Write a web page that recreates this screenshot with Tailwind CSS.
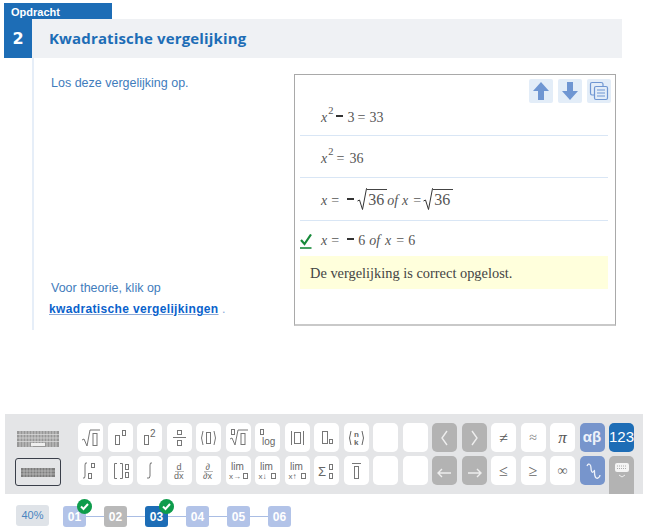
<!DOCTYPE html>
<html><head><meta charset="utf-8"><script src="https://cdn.jsdelivr.net/npm/@tailwindcss/browser@4"></script></head>
<body class="bg-white">
<div class="w-[645px] h-[531px] overflow-hidden font-['Liberation_Sans',sans-serif] text-[#3f7cbc]">
  <!-- opdracht -->
  <div class="pt-[3px] pl-[4px]">
    <div class="w-[108px] h-[16px] bg-[#1d6db6] text-white text-[11px] font-bold leading-[18px] pl-[7px]">Opdracht</div>
    <div class="flex h-[39px]">
      <div class="w-[28px] bg-[#1d6db6] text-white font-bold text-[16px] flex items-center justify-center font-['DejaVu_Sans',sans-serif]">2</div>
      <div class="w-[590px] bg-[#eff1f4] flex items-center pl-[17px] text-[#1d6db6] font-bold text-[15px] tracking-[0.15px] font-['Open_Sans',sans-serif]">Kwadratische vergelijking</div>
    </div>
    <div class="ml-[28px] h-[356px] flex items-start">
      <div class="w-[262px] h-[272px] border-l-2 border-[#e6eef8] pl-[17px] pt-[16px] flex flex-col text-[12.5px]">
        <div class="leading-[18px]">Los deze vergelijking op.</div>
        <div class="mt-[187px] leading-[18px]">Voor theorie, klik op</div>
        <div class="mt-[3px] -ml-[2px] leading-[18px] text-[#8aa8d8]"><a class="font-bold text-[12px] tracking-[0.35px] text-[#0a62cc] underline decoration-[#8aa8d8]">kwadratische vergelijkingen</a> .</div>
      </div>
      <!-- answer box -->
      <div class="mt-[16px] w-[322px] h-[252px] border border-[#a9a9a9] border-b-2 border-b-[#c9c9c9] relative pl-[5px] pr-[7px] font-['Liberation_Serif',serif] text-[#555] text-[14px] leading-[16px]">
        <div class="absolute top-[4px] right-[4px] flex gap-[5px]">
          <div class="w-[24px] h-[24px] bg-[#e3edf8] rounded-[2px] flex items-center justify-center">
            <svg width="18" height="20" viewBox="0 0 18 20"><path d="M9 1 L17 10 H12 V19 H6 V10 H1 Z" fill="#6f96d2"/></svg>
          </div>
          <div class="w-[24px] h-[24px] bg-[#e3edf8] rounded-[2px] flex items-center justify-center">
            <svg width="18" height="20" viewBox="0 0 18 20"><path d="M9 19 L17 10 H12 V1 H6 V10 H1 Z" fill="#6f96d2"/></svg>
          </div>
          <div class="w-[24px] h-[24px] bg-[#e3edf8] rounded-[2px] flex items-center justify-center">
            <svg width="20" height="20" viewBox="0 0 20 20" fill="none" stroke="#6f96d2" stroke-width="1.2"><path d="M5 14 H3 Q1.500 14 1.500 12 V3 Q1.500 1.500 3 1.500 H12 Q14 1.500 14 3 V5"/><rect x="5.500" y="5.500" width="13" height="13" rx="1.500" fill="#e3edf8"/><path d="M8 9 H16 M8 12 H16 M8 15 H16"/></svg>
          </div>
        </div>
        <div class="h-[61px] border-b border-[#d9e6f5] flex items-baseline pt-[35px] pl-[21px]">
          <i>x</i><span class="ml-[1px] text-[10.5px] relative -top-[8px]">2</span><span class="ml-[3px] w-[7px] h-[2px] bg-[#333] -translate-y-[5px]"></span><span class="ml-[4px]">3</span><span class="ml-[3px]">=</span><span class="ml-[4px]">33</span>
        </div>
        <div class="h-[42px] border-b border-[#d9e6f5] flex items-baseline pt-[15px] pl-[21px]">
          <i>x</i><span class="ml-[1px] text-[10.5px] relative -top-[8px]">2</span><span class="ml-[3px]">=</span><span class="ml-[5px]">36</span>
        </div>
        <div class="h-[43px] border-b border-[#d9e6f5] flex items-baseline pt-[11px] pl-[21px]">
          <i>x</i><span class="ml-[4px]">=</span><span class="ml-[8px] w-[7px] h-[2px] bg-[#333] -translate-y-[5px]"></span>
          <svg class="ml-[3px] -mt-[17px] translate-y-[5px]" width="10" height="22" viewBox="0 0 10 22" fill="none" stroke="#333"><path d="M0.500 13 L2.500 12 L5.500 21.500 L9.500 0.500 H10"/></svg>
          <span class="border-t border-[#444] pt-[2px] pl-[1px] pr-[3px] text-[16px]">36</span>
          <i>of</i><i class="ml-[4px]">x</i><span class="ml-[5px]">=</span>
          <svg class="ml-[2px] -mt-[17px] translate-y-[5px]" width="10" height="22" viewBox="0 0 10 22" fill="none" stroke="#333"><path d="M0.500 13 L2.500 12 L5.500 21.500 L9.500 0.500 H10"/></svg>
          <span class="border-t border-[#444] pt-[2px] pl-[1px] pr-[3px] text-[16px]">36</span>
        </div>
        <div class="h-[35px] flex items-baseline pt-[12px] pl-[21px] relative">
          <svg class="absolute left-0 top-[13px]" width="12" height="15" viewBox="0 0 12 15" fill="none" stroke="#178a3a"><path d="M1 6 L4.500 10 L11 0.500" stroke-width="2.2"/><path d="M0 14 H11.500" stroke-width="1.600"/></svg>
          <i>x</i><span class="ml-[4px]">=</span><span class="ml-[8px] w-[7px] h-[2px] bg-[#333] -translate-y-[5px]"></span><span class="ml-[4px]">6</span><i class="ml-[4px]">of</i><i class="ml-[5px]">x</i><span class="ml-[5px]">=</span><span class="ml-[4px]">6</span>
        </div>
        <div class="h-[33px] bg-[#ffffdc] pl-[10px] flex items-center text-[#444] text-[14.4px]">De vergelijking is correct opgelost.</div>
      </div>
    </div>
  </div>
  <!-- keyboard -->
  <div class="ml-[5px] w-[638px] h-[80px] bg-[#e4e5e7] flex text-[#6e6e6e]">
    <div class="w-[73px] relative shrink-0">
      <svg class="absolute left-[12px] top-[17px]" width="42" height="16" viewBox="0 0 42 16"><rect width="42" height="16" fill="#979797"/><path d="M0 3.500H42M0 7H42M0 10.500H42M3 0V16M6 0V16M9 0V16M12 0V16M15 0V16M18 0V12M21 0V12M24 0V12M27 0V12M30 0V16M33 0V16M36 0V16M39 0V16" stroke="#e0e0e0" stroke-width="0.7"/><rect x="14" y="12" width="14" height="3" fill="#efefef"/></svg>
      <div class="absolute left-[10px] top-[44px] w-[46px] h-[28px] border-[1.5px] border-[#3a3f4a] rounded-[3px] flex items-center justify-center">
        <svg width="34" height="9" viewBox="0 0 34 9"><rect width="34" height="9" fill="#7d7d7d"/><path d="M0 3H34M0 6H34M3 0V9M6 0V9M9 0V9M12 0V9M15 0V9M18 0V9M21 0V9M24 0V9M27 0V9M30 0V9" stroke="#d0d0d0" stroke-width="0.6"/></svg>
      </div>
    </div>
    <div class="pt-[9px] flex flex-col gap-[4px]">
      <div class="flex gap-[4.5px]">
        <div class="w-[25px] h-[29px] bg-white rounded-[5px] shrink-0"><svg width="25" height="29" fill="none" stroke="#777"><path d="M4 17 L6 16 L9 23 L12 7 H22"/><rect x="15" y="10.500" width="4" height="12"/></svg></div>
        <div class="w-[25px] h-[29px] bg-white rounded-[5px] shrink-0"><svg width="25" height="29" fill="none" stroke="#777"><rect x="7.500" y="12.500" width="4" height="9"/><rect x="14.500" y="7.500" width="3" height="5"/></svg></div>
        <div class="w-[25px] h-[29px] bg-white rounded-[5px] shrink-0 relative"><svg width="25" height="29" fill="none" stroke="#777"><rect x="7.500" y="12.500" width="4" height="9"/><text x="13" y="14" font-size="10" fill="#666" stroke="none">2</text></svg></div>
        <div class="w-[25px] h-[29px] bg-white rounded-[5px] shrink-0"><svg width="25" height="29" fill="none" stroke="#777"><rect x="10.500" y="7.500" width="4" height="4"/><path d="M6 14.500H19"/><rect x="10.500" y="17.500" width="4" height="5"/></svg></div>
        <div class="w-[25px] h-[29px] bg-white rounded-[5px] shrink-0"><svg width="25" height="29" fill="none" stroke="#777"><path d="M7 8 Q4 15 7 22M18 8 Q21 15 18 22"/><rect x="10.500" y="9.500" width="4" height="11"/></svg></div>
        <div class="w-[25px] h-[29px] bg-white rounded-[5px] shrink-0"><svg width="25" height="29" fill="none" stroke="#777"><rect x="5.500" y="6.500" width="3" height="5"/><path d="M4 16 L6 15 L9 22 L12 7 H22"/><rect x="15" y="10.500" width="4" height="11"/></svg></div>
        <div class="w-[25px] h-[29px] bg-white rounded-[5px] shrink-0"><svg width="25" height="29" fill="none" stroke="#777"><rect x="5.500" y="6.500" width="3" height="5"/><text x="7" y="22" font-size="10" fill="#666" stroke="none">log</text></svg></div>
        <div class="w-[25px] h-[29px] bg-white rounded-[5px] shrink-0"><svg width="25" height="29" fill="none" stroke="#777"><path d="M6.500 8V22M18.500 8V22"/><rect x="9.500" y="9.500" width="6" height="11"/></svg></div>
        <div class="w-[25px] h-[29px] bg-white rounded-[5px] shrink-0"><svg width="25" height="29" fill="none" stroke="#777"><rect x="8.500" y="8.500" width="5" height="12"/><rect x="15.500" y="16.500" width="3" height="4"/></svg></div>
        <div class="w-[25px] h-[29px] bg-white rounded-[5px] shrink-0"><svg width="25" height="29" fill="none" stroke="#666"><path d="M7 8 Q4 15 7 22M18 8 Q21 15 18 22"/><text x="10" y="14" font-size="8" font-weight="bold" fill="#666" stroke="none">n</text><text x="10" y="22" font-size="8" font-weight="bold" fill="#666" stroke="none">k</text></svg></div>
        <div class="w-[25px] h-[29px] bg-white rounded-[5px] shrink-0"></div>
        <div class="w-[25px] h-[29px] bg-white rounded-[5px] shrink-0"></div>
        <div class="w-[25px] h-[29px] bg-[#b3b3b3] rounded-[5px] shrink-0"><svg width="25" height="29" fill="none" stroke="#eee" stroke-width="1.400"><path d="M15 8 L10 15 L15 22"/></svg></div>
        <div class="w-[25px] h-[29px] bg-[#b3b3b3] rounded-[5px] shrink-0"><svg width="25" height="29" fill="none" stroke="#eee" stroke-width="1.400"><path d="M10 8 L15 15 L10 22"/></svg></div>
        <div class="w-[25px] h-[29px] bg-white rounded-[5px] shrink-0 flex items-center justify-center text-[16px] text-[#555] italic font-['Liberation_Serif',serif]">≠</div>
        <div class="w-[25px] h-[29px] bg-white rounded-[5px] shrink-0 flex items-center justify-center text-[14px] text-[#888] font-['Liberation_Serif',serif]">≈</div>
        <div class="w-[25px] h-[29px] bg-white rounded-[5px] shrink-0 flex items-center justify-center text-[17px] text-[#555] italic font-['Liberation_Serif',serif]">π</div>
        <div class="w-[25px] h-[29px] bg-[#7795cc] rounded-[5px] shrink-0 flex items-center justify-center text-[15px] text-[#eef2fa] font-bold">αβ</div>
        <div class="w-[25px] h-[29px] bg-[#1d6db6] rounded-[5px] shrink-0 flex items-center justify-center text-[15px] text-white">123</div>
      </div>
      <div class="flex gap-[4.5px] items-start">
        <div class="w-[25px] h-[29px] bg-white rounded-[5px] shrink-0"><svg width="25" height="29" fill="none" stroke="#777"><path d="M9 7 Q7 6 7 9 V20 Q7 23 5 22"/><rect x="13.500" y="7.500" width="3" height="4"/><rect x="10.500" y="17.500" width="3" height="5"/></svg></div>
        <div class="w-[25px] h-[29px] bg-white rounded-[5px] shrink-0"><svg width="25" height="29" fill="none" stroke="#777"><path d="M9 7.500H6.500V22.500H9M12 7.500H14.500V22.500H12"/><rect x="17.500" y="8.500" width="3" height="5"/><rect x="17.500" y="16.500" width="3" height="5"/></svg></div>
        <div class="w-[25px] h-[29px] bg-white rounded-[5px] shrink-0"><svg width="25" height="29" fill="none" stroke="#777"><path d="M15 7 Q13 6 13 9 V20 Q13 23 10 22"/></svg></div>
        <div class="w-[25px] h-[29px] bg-white rounded-[5px] shrink-0 relative"><svg width="25" height="29" fill="none" stroke="#777"><text x="9.500" y="14" font-size="9" fill="#666" stroke="none">d</text><path d="M8 15.500H17" stroke="#bbb"/><text x="7" y="23" font-size="9" fill="#666" stroke="none">dx</text></svg></div>
        <div class="w-[25px] h-[29px] bg-white rounded-[5px] shrink-0"><svg width="25" height="29" fill="none" stroke="#777"><text x="9.500" y="14" font-size="9" fill="#666" stroke="none">∂</text><path d="M8 15.500H17" stroke="#bbb"/><text x="7" y="23" font-size="9" fill="#666" stroke="none">∂x</text></svg></div>
        <div class="w-[25px] h-[29px] bg-white rounded-[5px] shrink-0"><svg width="25" height="29" fill="#666"><text x="5" y="14" font-size="10">lim</text><text x="3" y="23" font-size="8">x→</text><rect x="17.500" y="17.500" width="4" height="5" fill="none" stroke="#777"/></svg></div>
        <div class="w-[25px] h-[29px] bg-white rounded-[5px] shrink-0"><svg width="25" height="29" fill="#666"><text x="5" y="14" font-size="10">lim</text><text x="3.500" y="23" font-size="8">x↓</text><rect x="16.500" y="17.500" width="4" height="5" fill="none" stroke="#777"/></svg></div>
        <div class="w-[25px] h-[29px] bg-white rounded-[5px] shrink-0"><svg width="25" height="29" fill="#666"><text x="5" y="14" font-size="10">lim</text><text x="3.500" y="23" font-size="8">x↑</text><rect x="16.500" y="17.500" width="4" height="5" fill="none" stroke="#777"/></svg></div>
        <div class="w-[25px] h-[29px] bg-white rounded-[5px] shrink-0"><svg width="25" height="29" fill="#666"><text x="4" y="20" font-size="13">Σ</text><rect x="15.500" y="8.500" width="3" height="5" fill="none" stroke="#777"/><rect x="15.500" y="17.500" width="3" height="5" fill="none" stroke="#777"/></svg></div>
        <div class="w-[25px] h-[29px] bg-white rounded-[5px] shrink-0"><svg width="25" height="29" fill="none" stroke="#777"><path d="M8 7.500H17"/><rect x="10.500" y="10.500" width="4" height="12"/></svg></div>
        <div class="w-[25px] h-[29px] bg-white rounded-[5px] shrink-0"></div>
        <div class="w-[25px] h-[29px] bg-white rounded-[5px] shrink-0"></div>
        <div class="w-[25px] h-[29px] bg-[#b3b3b3] rounded-[5px] shrink-0"><svg width="25" height="29" fill="none" stroke="#eee" stroke-width="1.400"><path d="M19 17H6M10 13 L6 17 L10 21"/></svg></div>
        <div class="w-[25px] h-[29px] bg-[#b3b3b3] rounded-[5px] shrink-0"><svg width="25" height="29" fill="none" stroke="#eee" stroke-width="1.400"><path d="M6 17H19M15 13 L19 17 L15 21"/></svg></div>
        <div class="w-[25px] h-[29px] bg-white rounded-[5px] shrink-0 flex items-center justify-center text-[16px] text-[#666] font-['Liberation_Serif',serif]">≤</div>
        <div class="w-[25px] h-[29px] bg-white rounded-[5px] shrink-0 flex items-center justify-center text-[16px] text-[#666] font-['Liberation_Serif',serif]">≥</div>
        <div class="w-[25px] h-[29px] bg-white rounded-[5px] shrink-0 flex items-center justify-center text-[14px] text-[#666] font-['Liberation_Serif',serif]">∞</div>
        <div class="w-[25px] h-[29px] bg-[#7795cc] rounded-[5px] shrink-0"><svg width="25" height="29" fill="none" stroke="#eef2fa" stroke-width="1.300"><path d="M7 10 C9 6 11 9 11 12 C11 15 12 18 14 15 C15 13 14 18 15 20 C16 24 20 22 20 19"/></svg></div>
        <div class="w-[25px] h-[38px] bg-[#b3b3b3] rounded-t-[5px] shrink-0 flex flex-col items-center pt-[7px]">
          <svg width="16" height="15" viewBox="0 0 16 15" fill="none"><rect x="1" y="0" width="14" height="9" rx="2" fill="#f4f4f4"/><path d="M3 3H13M3 5.500H13" stroke="#999" stroke-width="0.8" stroke-dasharray="1 1"/><path d="M5 12 L8 14 L11 12" stroke="#eee"/></svg>
        </div>
      </div>
    </div>
  </div>
  <!-- progress -->
  <div class="ml-[16px] mt-[11px] flex items-start">
    <div class="w-[33px] h-[21px] bg-[#dfe3e8] rounded-[3px] text-[11px] text-[#4a84c0] flex items-center justify-center">40%</div>
    <div class="ml-[14px] mt-[1px] flex items-center text-white font-bold text-[12px]">
      <div class="w-[23px] h-[21px] bg-[#b2c3e8] rounded-[3px] flex items-center justify-center relative">01
        <svg class="absolute -top-[7px] left-[14px]" width="15" height="15" viewBox="0 0 15 15"><circle cx="7.500" cy="7.500" r="7.500" fill="#0e9c4c"/><path d="M4 7.500 L6.500 10 L11 5" fill="none" stroke="#fff" stroke-width="2"/></svg>
      </div>
      <div class="w-[18px] h-px bg-[#a9bde4]"></div>
      <div class="w-[23px] h-[21px] bg-[#b9b9b9] rounded-[3px] flex items-center justify-center">02</div>
      <div class="w-[18px] h-px bg-[#a9bde4]"></div>
      <div class="w-[23px] h-[21px] bg-[#1d6db6] rounded-[3px] flex items-center justify-center relative">03
        <svg class="absolute -top-[7px] left-[14px]" width="15" height="15" viewBox="0 0 15 15"><circle cx="7.500" cy="7.500" r="7.500" fill="#0e9c4c"/><path d="M4 7.500 L6.500 10 L11 5" fill="none" stroke="#fff" stroke-width="2"/></svg>
      </div>
      <div class="w-[18px] h-px bg-[#a9bde4]"></div>
      <div class="w-[23px] h-[21px] bg-[#b2c3e8] rounded-[3px] flex items-center justify-center">04</div>
      <div class="w-[18px] h-px bg-[#a9bde4]"></div>
      <div class="w-[23px] h-[21px] bg-[#b2c3e8] rounded-[3px] flex items-center justify-center">05</div>
      <div class="w-[18px] h-px bg-[#a9bde4]"></div>
      <div class="w-[23px] h-[21px] bg-[#b2c3e8] rounded-[3px] flex items-center justify-center">06</div>
    </div>
  </div>
</div>
</body></html>
